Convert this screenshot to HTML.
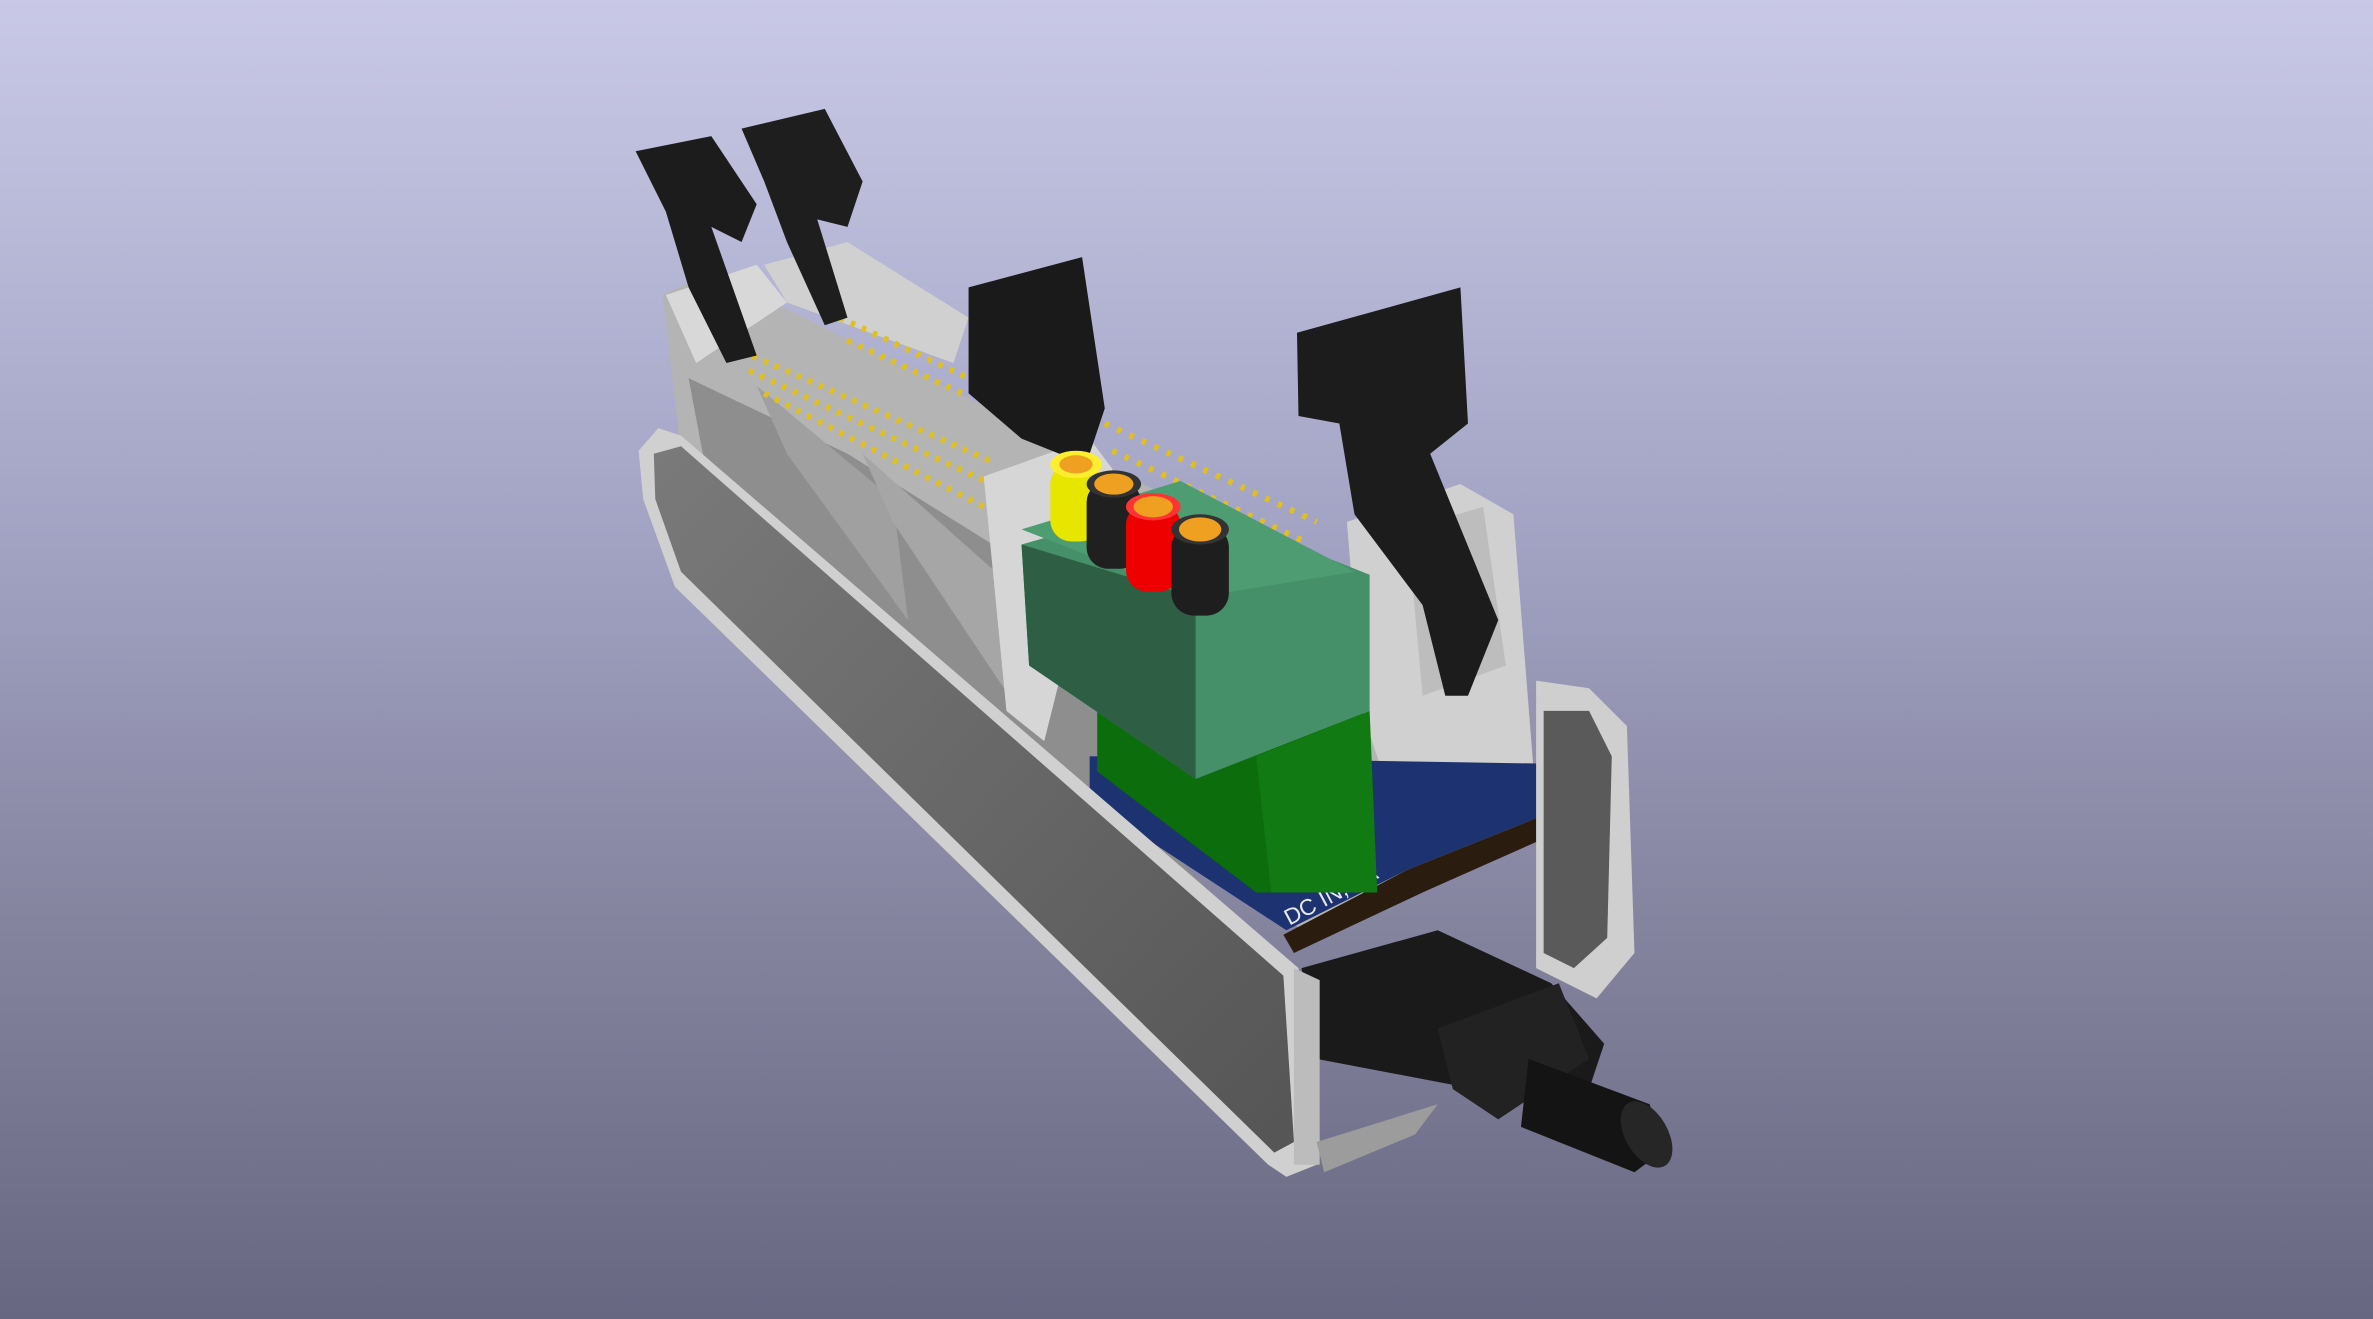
<!DOCTYPE html>
<html><head><meta charset="utf-8"><style>
html,body{margin:0;padding:0;width:2373px;height:1319px;overflow:hidden}
body{background:linear-gradient(#c9c9e7,#a3a3c4 40%,#84849f 70%,#676782)}
svg{position:absolute;left:0;top:0}
</style></head><body>
<svg width="2373" height="1319" viewBox="0 0 1568 872" preserveAspectRatio="none">
<defs>
<linearGradient id="wall" x1="0" y1="0" x2="1" y2="1"><stop offset="0" stop-color="#7a7a7a"/><stop offset="1" stop-color="#555"/></linearGradient>
</defs>
<!-- inner connectors body -->
<polygon points="438,195 470,180 1000,440 1015,540 870,620 700,520 450,300" fill="#b4b4b4"/>
<polygon points="455,250 560,300 720,400 730,520 850,640 470,330" fill="#8e8e8e"/>
<polygon points="500,255 520,300 600,410 590,330" fill="#a0a0a0"/>
<polygon points="570,300 590,345 680,480 660,380" fill="#a6a6a6"/>
<polygon points="440,195 500,175 520,200 460,240" fill="#d8d8d8"/>
<polygon points="505,175 560,160 640,210 630,240 520,200" fill="#d0d0d0"/>
<!-- yellow pins -->
<g stroke="#e0c020" stroke-width="4">
<path d="M490,232 L655,305" stroke-dasharray="3 5"/>
<path d="M495,245 L655,320" stroke-dasharray="3 5"/>
<path d="M505,260 L650,335" stroke-dasharray="3 5"/>
<path d="M555,210 L640,250" stroke-dasharray="3 5"/>
<path d="M560,225 L640,262" stroke-dasharray="3 5"/>
<path d="M730,280 L870,345" stroke-dasharray="3 6"/>
<path d="M735,298 L862,358" stroke-dasharray="3 6"/>
</g>
<!-- right clip -->
<polygon points="890,345 965,320 1000,340 1015,530 930,560 900,470" fill="#d0d0d0"/>
<polygon points="930,350 980,335 995,440 940,460" fill="#bdbdbd"/>
<!-- left white part near green -->
<polygon points="650,315 720,290 735,310 690,490 665,470" fill="#d6d6d6"/>
<!-- black levers -->
<polygon points="420,100 470,90 500,135 490,160 470,150 500,235 480,240 455,190 440,140" fill="#1c1c1c"/>
<polygon points="490,85 545,72 570,120 560,150 540,145 560,210 545,215 520,160 505,120" fill="#1e1e1e"/>
<polygon points="640,190 715,170 730,270 720,300 700,300 675,290 640,260" fill="#1a1a1a"/>
<polygon points="857,220 965,190 970,280 945,300 990,410 970,460 955,460 940,400 895,340 885,280 858,275" fill="#1c1c1c"/>
<!-- PCB -->
<polygon points="720,500 1030,505 1030,535 930,575 850,615 720,530" fill="#1d3270"/>
<polygon points="848,618 930,575 1030,535 1030,550 940,590 855,630" fill="#2a1d10"/>
<text x="0" y="0" transform="translate(852,612) rotate(-28)" font-family="Liberation Sans,sans-serif" font-size="15" fill="#e8e8f0">DC IN, 2A</text>
<!-- green connector -->
<polygon points="725,470 900,460 910,590 830,590 725,510" fill="#0c6d0c"/>
<polygon points="830,500 905,470 910,590 840,590" fill="#127a12"/>
<polygon points="675,360 780,330 905,380 905,470 790,515 680,440" fill="#459068"/>
<polygon points="675,360 790,395 790,515 680,440" fill="#2e5e44"/>
<polygon points="675,350 780,318 895,378 790,395" fill="#4d9c72"/>
<!-- test points -->
<g>
<rect x="694" y="306" width="34" height="52" rx="14" fill="#e6e600"/><ellipse cx="711" cy="307" rx="17" ry="9" fill="#ffee30"/><ellipse cx="711" cy="307" rx="11" ry="6" fill="#f0a020"/>
<rect x="718" y="318" width="36" height="58" rx="14" fill="#202020"/><ellipse cx="736" cy="320" rx="18" ry="9" fill="#333"/><ellipse cx="736" cy="320" rx="13" ry="7" fill="#f0a020"/>
<rect x="744" y="333" width="36" height="58" rx="14" fill="#e00"/><ellipse cx="762" cy="335" rx="18" ry="9" fill="#f33"/><ellipse cx="762" cy="335" rx="13" ry="7" fill="#f0a020"/>
<rect x="774" y="347" width="38" height="60" rx="15" fill="#1e1e1e"/><ellipse cx="793" cy="350" rx="19" ry="10" fill="#333"/><ellipse cx="793" cy="350" rx="14" ry="8" fill="#f0a020"/>
</g>
<!-- end cap right -->
<polygon points="1015,450 1050,455 1075,480 1080,630 1055,660 1015,640" fill="#cfcfcf"/>
<polygon points="1020,470 1050,470 1065,500 1062,620 1040,640 1020,630" fill="#5a5a5a"/>
<!-- barrel jack -->
<polygon points="860,640 950,615 1025,650 1060,690 1050,720 975,720 870,700" fill="#1a1a1a"/>
<polygon points="950,680 1030,650 1050,700 990,740 960,720" fill="#222"/>
<polygon points="1010,700 1090,730 1100,760 1080,775 1005,745" fill="#141414"/>
<ellipse cx="1088" cy="750" rx="14" ry="24" transform="rotate(-30 1088 750)" fill="#262626"/>
<!-- front wall -->
<polygon points="422,298 435,283 450,288 858,640 870,770 850,778 838,770 446,388 425,330" fill="#d0d0d0"/>
<polygon points="432,300 450,295 848,645 855,755 842,762 450,378 433,330" fill="url(#wall)"/>
<polygon points="855,640 872,648 872,770 855,770" fill="#bcbcbc"/>
<polygon points="870,755 950,730 935,750 875,775" fill="#9c9c9c"/>
</svg>
</body></html>
